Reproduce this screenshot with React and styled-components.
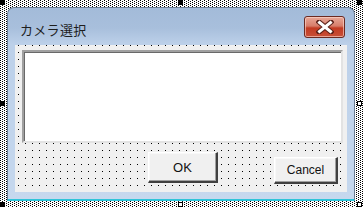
import React from "react";
import styled, { createGlobalStyle } from "styled-components";

const GlobalStyle = createGlobalStyle`
  html, body { margin: 0; padding: 0; background: #fff; }
  body { font-family: "Liberation Sans", Arial, sans-serif; }
`;

const hatch = `url("data:image/svg+xml,%3Csvg xmlns='http://www.w3.org/2000/svg' width='4' height='2' shape-rendering='crispEdges'%3E%3Crect width='4' height='2' fill='%23fff'/%3E%3Crect x='0' y='0' width='1' height='1' fill='%23000'/%3E%3Crect x='2' y='1' width='1' height='1' fill='%23000'/%3E%3C/svg%3E")`;
const grid = `url("data:image/svg+xml,%3Csvg xmlns='http://www.w3.org/2000/svg' width='7' height='7' shape-rendering='crispEdges'%3E%3Crect x='3' y='0' width='1' height='1' fill='%23000'/%3E%3C/svg%3E")`;

const Selection = styled.div`
  position: relative;
  width: 363px;
  height: 207px;
  box-sizing: border-box;
  padding: 7px 8px 6px 7px;
  background-image: ${hatch};
  background-repeat: repeat;
`;

const Handle = styled.div`
  position: absolute;
  width: 5px;
  height: 5px;
  box-sizing: border-box;
  border: 1px solid #000;
  background: ${(p) => (p.$hollow ? "#fff" : "#000")};
`;

const Window = styled.div`
  height: 100%;
  box-sizing: border-box;
  display: flex;
  flex-direction: column;
  border: 1px solid #6a7c92;
  border-bottom: 2px solid #2ec4d8;
  border-radius: 7px 7px 0 0;
  background: linear-gradient(#a3bbd9 0px, #a8bfdc 20px, #bcd0e9 36px, #c6d8ee 100%);
  padding: 0 7px 7px 7px;
`;

const TitleBar = styled.div`
  height: 37px;
  display: flex;
  align-items: center;
  justify-content: space-between;
  padding: 2px 2px 0 5px;
  box-sizing: border-box;
`;

const Title = styled.span`
  font-family: "Noto Sans CJK JP", "Noto Sans", sans-serif;
  font-size: 13px;
  color: #1e1e1e;
  letter-spacing: 0.3px;
  margin-top: 3px;
`;

const CloseButton = styled.div`
  width: 41px;
  height: 22px;
  box-sizing: border-box;
  border: 1px solid #6b2a22;
  border-radius: 3px;
  background: linear-gradient(#e8a898 0%, #d77d6a 45%, #c23a22 55%, #c85038 100%);
  box-shadow: inset 0 0 0 1px rgba(255, 220, 210, 0.6);
  display: flex;
  align-items: center;
  justify-content: center;
  margin-top: -2px;
`;

const Client = styled.div`
  flex: 1;
  display: flex;
  flex-direction: column;
  gap: 9px;
  padding: 5px 4px 0 7px;
  background-color: #f0f0f0;
  background-image: ${grid};
  background-position: 0 0;
`;

const ListBox = styled.div`
  width: 321px;
  height: 93px;
  box-sizing: border-box;
  background: #fff;
  border-style: solid;
  border-width: 2px;
  border-color: #a0a0a0 #e3e3e3 #e3e3e3 #a0a0a0;
  box-shadow: inset 1px 1px 0 #696969;
`;

const ButtonRow = styled.div`
  display: flex;
  align-items: flex-start;
  gap: 56px;
  padding-left: 126px;
`;

const Button = styled.div`
  width: ${(p) => p.$w}px;
  height: ${(p) => p.$h}px;
  margin-top: ${(p) => p.$offset || 0}px;
  box-sizing: border-box;
  background: #f0f0f0;
  border-style: solid;
  border-width: 1px 2px 2px 1px;
  border-color: #fff #404040 #404040 #fff;
  box-shadow: inset -1px -1px 0 #a0a0a0, inset 1px 1px 0 #f8f8f8;
  display: flex;
  align-items: center;
  justify-content: center;
  font-family: "Liberation Sans", Arial, sans-serif;
  font-size: ${(p) => p.$fs}px;
  color: #111;
`;

export default function App() {
  return (
    <>
      <GlobalStyle />
      <Selection>
        <Handle style={{ left: 0, top: 0 }} />
        <Handle style={{ left: 178, top: 0 }} />
        <Handle style={{ left: 357, top: 0 }} />
        <Handle style={{ left: 0, top: 101 }} />
        <Handle $hollow style={{ left: 357, top: 101 }} />
        <Handle style={{ left: 0, top: 202 }} />
        <Handle $hollow style={{ left: 178, top: 202 }} />
        <Handle $hollow style={{ left: 357, top: 202 }} />
        <Window>
          <TitleBar>
            <Title>カメラ選択</Title>
            <CloseButton>
              <svg width="18" height="14" viewBox="0 0 18 14">
                <path d="M3 2 L15 12 M15 2 L3 12" stroke="#5a2018" strokeWidth="5" strokeLinecap="square" />
                <path d="M3.5 2.5 L14.5 11.5 M14.5 2.5 L3.5 11.5" stroke="#fff" strokeWidth="3" strokeLinecap="square" />
              </svg>
            </CloseButton>
          </TitleBar>
          <Client>
            <ListBox />
            <ButtonRow>
              <Button $w={70} $h={31} $fs={13}>OK</Button>
              <Button $w={64} $h={27} $fs={12} $offset={5}>Cancel</Button>
            </ButtonRow>
          </Client>
        </Window>
      </Selection>
    </>
  );
}
